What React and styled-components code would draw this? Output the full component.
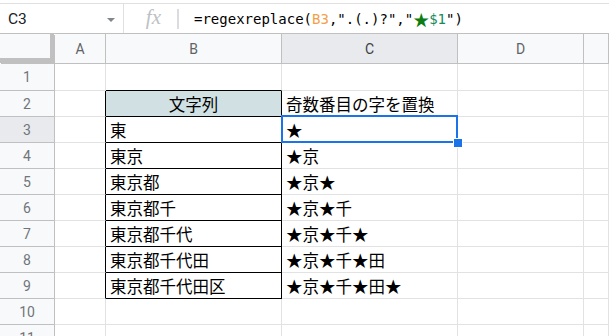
import React from "react";
import styled, { createGlobalStyle } from "styled-components";

const GlobalStyle = createGlobalStyle`
  html, body {
    margin: 0;
    padding: 0;
    background: #ffffff;
    overflow: hidden;
  }
  body {
    font-family: Roboto, "Noto Sans", sans-serif;
  }
`;

const Page = styled.div`
  width: 609px;
  height: 336px;
  overflow: hidden;
  background: #fff;
`;

const FormulaBar = styled.div`
  margin-top: 3px;
  height: 29px;
  border-top: 1px solid #e0e0e0;
  display: flex;
  align-items: center;
`;

const NameBox = styled.div`
  width: 124px;
  height: 100%;
  box-sizing: border-box;
  border-right: 1px solid #e0e0e0;
  display: flex;
  align-items: center;
  justify-content: space-between;
  padding: 0 8px 0 8px;
  font-size: 15.5px;
  color: #202124;
`;

const Caret = styled.span`
  width: 0;
  height: 0;
  border-left: 4px solid transparent;
  border-right: 4px solid transparent;
  border-top: 4px solid #80868b;
  margin-top: 2px;
`;

const FxBox = styled.div`
  width: 55px;
  height: 100%;
  display: flex;
  align-items: center;
  justify-content: flex-end;
  gap: 16px;
`;

const Fx = styled.span`
  font-family: "Liberation Serif", serif;
  font-style: italic;
  font-size: 21px;
  color: #bdc1c6;
  margin-top: -2px;
`;

const Divider = styled.span`
  width: 2px;
  height: 20px;
  background: #dadce0;
`;

const Formula = styled.div`
  margin-left: 15px;
  font-family: "DejaVu Sans Mono", "Liberation Mono", monospace;
  font-size: 14px;
  color: #000;
  white-space: pre;
  display: flex;
  align-items: center;
`;

const Tok = styled.span`
  color: ${(p) => p.$c || "inherit"};
`;

const Star = styled.span`
  font-family: "Noto Sans CJK JP", sans-serif;
  font-size: 16px;
  line-height: 1;
  color: #0b7d12;
`;

const Sheet = styled.div`
  border-top: 1px solid #c0c0c0;
`;

const Row = styled.div`
  display: grid;
  grid-template-columns: 55px 51px 176px 176px 126px 1fr;
  height: ${(p) => p.$h}px;
`;

const HeadCell = styled.div`
  box-sizing: border-box;
  border-right: 1px solid #c0c0c0;
  border-bottom: 1px solid #c0c0c0;
  background: ${(p) => (p.$active ? "#e8eaed" : "#f8f9fa")};
  color: ${(p) => (p.$active ? "#3c4043" : "#5f6368")};
  font-size: 14px;
  display: flex;
  align-items: center;
  justify-content: center;
`;

const Corner = styled.div`
  box-sizing: border-box;
  background: #f8f9fa;
  border-right: 4px solid #c0c0c0;
  border-bottom: 5px solid #c0c0c0;
  margin-right: 1px;
  margin-bottom: 1px;
  box-shadow: 1px 1px 0 #c0c0c0;
`;

const RowNum = styled(HeadCell)`
  color: #70757a;
`;

const Cell = styled.div`
  position: relative;
  box-sizing: border-box;
  border-right: 1px solid ${(p) => (p.$edgeRight ? "#000" : "#e2e2e2")};
  border-bottom: 1px solid ${(p) => (p.$edgeBottom ? "#000" : "#e2e2e2")};
  background: ${(p) => p.$bg || "#fff"};
  display: flex;
  align-items: center;
  justify-content: ${(p) => (p.$center ? "center" : "flex-start")};
  padding: 1px 4px 0;
  font-family: "Noto Sans CJK JP", "Noto Sans", sans-serif;
  font-size: 16.5px;
  line-height: 1;
  color: #000;
  white-space: nowrap;
`;

const Selection = styled.div`
  position: absolute;
  top: -2px;
  left: -1px;
  right: -1px;
  bottom: -1px;
  border: 2px solid #1a73e8;
  pointer-events: none;
  z-index: 2;
`;

const Handle = styled.div`
  position: absolute;
  right: -6px;
  bottom: -6px;
  width: 8px;
  height: 8px;
  background: #1a73e8;
  box-shadow: 0 0 0 1px #fff;
`;

const cols = ["A", "B", "C", "D", ""];

const rows = [
  { n: 1, b: "", c: "" },
  { n: 2, b: "文字列", c: "奇数番目の字を置換", head: true },
  { n: 3, b: "東", c: "★", selected: true },
  { n: 4, b: "東京", c: "★京" },
  { n: 5, b: "東京都", c: "★京★" },
  { n: 6, b: "東京都千", c: "★京★千" },
  { n: 7, b: "東京都千代", c: "★京★千★" },
  { n: 8, b: "東京都千代田", c: "★京★千★田" },
  { n: 9, b: "東京都千代田区", c: "★京★千★田★" },
  { n: 10, b: "", c: "" },
  { n: 11, b: "", c: "" },
];

export default function App() {
  return (
    <Page>
      <GlobalStyle />
      <FormulaBar>
        <NameBox>
          <span>C3</span>
          <Caret />
        </NameBox>
        <FxBox>
          <Fx>fx</Fx>
          <Divider />
        </FxBox>
        <Formula>
          <span>=regexreplace(</span>
          <Tok $c="#f4a04a">B3</Tok>
          <span>,".(.)?","</span>
          <Star>★</Star>
          <Tok $c="#188a5a">$1</Tok>
          <span>")</span>
        </Formula>
      </FormulaBar>
      <Sheet>
        <Row $h={30}>
          <Corner />
          {cols.map((c, i) => (
            <HeadCell key={i} $active={c === "C"}>
              {c}
            </HeadCell>
          ))}
        </Row>
        {rows.map((r) => {
          const inTable = r.n >= 2 && r.n <= 9;
          return (
            <Row key={r.n} $h={r.n === 1 ? 27 : 26}>
              <RowNum $active={r.selected}>{r.n}</RowNum>
              <Cell $edgeRight={inTable} />
              <Cell
                $edgeRight={inTable}
                $edgeBottom={r.n >= 1 && r.n <= 9}
                $bg={r.head ? "#d0e0e3" : undefined}
                $center={r.head}
              >
                {r.b}
              </Cell>
              <Cell>
                {r.c}
                {r.selected && (
                  <Selection>
                    <Handle />
                  </Selection>
                )}
              </Cell>
              <Cell />
              <Cell />
            </Row>
          );
        })}
      </Sheet>
    </Page>
  );
}
